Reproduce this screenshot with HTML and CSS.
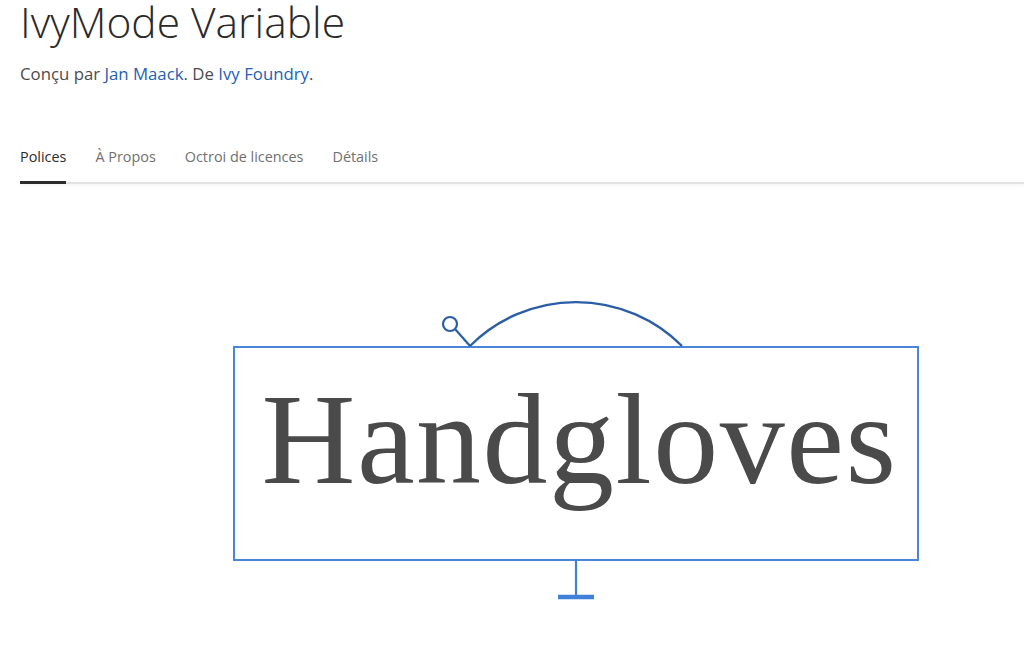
FILE: index.html
```html
<!DOCTYPE html>
<html lang="fr">
<head>
<meta charset="utf-8">
<title>IvyMode Variable</title>
<link rel="stylesheet" href="styles.css">
</head>
<body>
<header class="head">
  <h1 class="title">IvyMode Variable</h1>
  <p class="byline">Conçu par <a href="#" class="link">Jan Maack</a>. De <a href="#" class="link">Ivy Foundry</a>.</p>
</header>
<nav class="tabs">
  <a href="#" class="tab active">Polices</a>
  <a href="#" class="tab">À Propos</a>
  <a href="#" class="tab">Octroi de licences</a>
  <a href="#" class="tab">Détails</a>
</nav>
<main class="stage">
  <div class="specimen">
    <span class="sample">Handgloves</span>
    <svg class="guides" width="686" height="320" viewBox="0 -60 686 320" aria-hidden="true">
      <circle cx="217" cy="-22" r="7" fill="none" stroke="#2c5ea8" stroke-width="2.2"/>
      <line x1="222" y1="-17" x2="237" y2="0" stroke="#2c5ea8" stroke-width="2.2"/>
      <path d="M237 0 A150 150 0 0 1 449 0" fill="none" stroke="#2c5ea8" stroke-width="2.4"/>
      <line x1="343" y1="214" x2="343" y2="250" stroke="#3f80d8" stroke-width="2.2"/>
      <line x1="325" y1="251" x2="361" y2="251" stroke="#3f80d8" stroke-width="4.5"/>
    </svg>
  </div>
</main>
</body>
</html>
```
FILE: styles.css
```css
html, body {
  margin: 0;
  padding: 0;
  background: #ffffff;
}
body {
  font-family: "Open Sans", "Liberation Sans", sans-serif;
  color: #2c2c2c;
  width: 1024px;
  height: 655px;
  overflow: hidden;
}
.head {
  padding-left: 20px;
}
.title {
  margin: 0;
  font-size: 42.5px;
  font-weight: 300;
  line-height: 44px;
  color: #2a2a2a;
}
.byline {
  margin: 18px 0 0;
  font-size: 16.8px;
  line-height: 24px;
  color: #4b4b4b;
}
.link {
  color: #2460b6;
  text-decoration: none;
}
.tabs {
  margin-left: 20px;
  margin-top: 59px;
  display: flex;
  gap: 29px;
  border-bottom: 2px solid #e4e4e4;
  box-shadow: 0 2px 3px rgba(0,0,0,0.04);
}
.tab {
  font-size: 14.4px;
  line-height: 20px;
  padding: 2px 0 14px;
  color: #707070;
  text-decoration: none;
  margin-bottom: -2px;
  border-bottom: 3px solid transparent;
}
.tab.active {
  color: #2c2c2c;
  border-bottom-color: #2c2c2c;
}
.stage {
  padding-top: 162px;
  padding-left: 233px;
}
.specimen {
  position: relative;
  width: 682px;
  height: 211px;
  border: 2px solid #4a86d8;
  display: flex;
  justify-content: center;
  align-items: flex-start;
}
.sample {
  font-family: "Liberation Serif", "Times New Roman", serif;
  font-size: 130px;
  line-height: 150px;
  margin-top: 16px;
  margin-left: 7px;
  letter-spacing: 1.5px;
  color: #4a4a4a;
}
.guides {
  position: absolute;
  left: -2px;
  top: -62px;
  overflow: visible;
}
```
